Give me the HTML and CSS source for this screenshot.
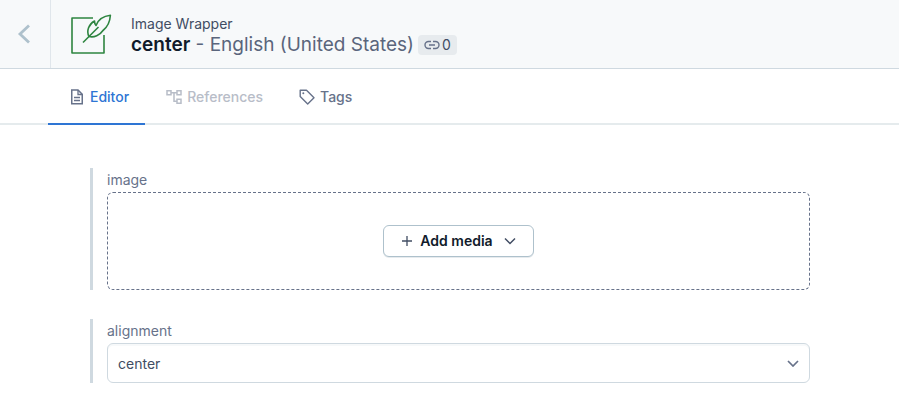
FILE: index.html
```html
<!DOCTYPE html>
<html lang="en">
<head>
<meta charset="utf-8">
<meta name="viewport" content="width=device-width, initial-scale=1">
<title>Image Wrapper</title>
<link rel="stylesheet" href="styles.css">
</head>
<body>
<header class="header">
  <button class="back" type="button" aria-label="Back">
    <svg width="14" height="22" viewBox="0 0 14 22" fill="none" stroke="currentColor" stroke-width="2.8"><path d="M12 2.500 3 11l9 8.500"/></svg>
  </button>
  <svg class="logo" width="42" height="42" viewBox="0 0 42 42" fill="none" stroke="currentColor" stroke-width="1.6" stroke-linejoin="round">
    <path d="M23 5H2v35h32V22"/>
    <path d="M13 29.500 28.500 14"/>
    <path d="M19 23.500C16 18 19 11 24.500 8C24.500 10 25 11.500 26 12.500C28.500 6 34 3 40.400 2.300C40 8 37.500 14 33 17.500C30 22 24 25 19 23.500Z"/>
  </svg>
  <div class="heading">
    <p class="kind">Image Wrapper</p>
    <div class="title-row">
      <h1 class="title"><strong>center</strong> - English (United States)</h1>
      <span class="badge">
        <svg width="16" height="10" viewBox="0 0 16 10" fill="none" stroke="currentColor" stroke-width="1.4"><path d="M7 1.500H4.500a3.500 3.500 0 0 0 0 7H7M9 1.500h2.500a3.500 3.500 0 0 1 0 7H9M5 5h6"/></svg>
        0
      </span>
    </div>
  </div>
</header>
<nav class="tabs">
  <a class="tab active" href="#editor">
    <svg width="14" height="16" viewBox="0 0 14 16" fill="none" stroke="currentColor" stroke-width="1.5"><path d="M1.750 1H8l4.250 4.250V14.750H1.750Z"/><path d="M8 1v4.500h4.250M4 8.500h6M4 11.500h6" stroke-width="1.300"/></svg>
    Editor
  </a>
  <a class="tab disabled" href="#references" aria-disabled="true">
    <svg width="16" height="16" viewBox="0 0 16 16" fill="none" stroke="currentColor" stroke-width="1.500"><path d="M1 1.750h4v4H1ZM11 1.750h4v4h-4ZM11 10.250h4v4h-4ZM5 3.750h6M8 3.750v8.500h3"/></svg>
    References
  </a>
  <a class="tab" href="#tags">
    <svg width="16" height="16" viewBox="0 0 16 16" fill="none" stroke="currentColor" stroke-width="1.400" stroke-linejoin="round"><path d="M1.200 1.200H7.500L15 8.700 8.700 15 1.200 7.500Z"/><circle cx="4.300" cy="4.300" r="1" fill="currentColor" stroke="none"/></svg>
    Tags
  </a>
</nav>
<main class="form">
  <section class="field" aria-labelledby="image-label">
    <span class="label" id="image-label">image</span>
    <div class="dropzone">
      <button class="add" type="button">
        <svg width="12" height="12" viewBox="0 0 12 12" fill="none" stroke="currentColor" stroke-width="1.300"><path d="M6 1v10M1 6h10"/></svg>
        <span>Add media</span>
        <svg class="caret" width="12" height="8" viewBox="0 0 12 8" fill="none" stroke="currentColor" stroke-width="1.500"><path d="m1 1.500 5 5 5-5"/></svg>
      </button>
    </div>
  </section>
  <section class="field">
    <label class="label" for="alignment">alignment</label>
    <div class="select-wrap">
      <select class="select" id="alignment">
        <option>center</option>
      </select>
      <svg class="select-caret" width="12" height="8" viewBox="0 0 12 8" fill="none" stroke="currentColor" stroke-width="1.700"><path d="m1 2 5 5 5-5"/></svg>
    </div>
  </section>
</main>
</body>
</html>
```
FILE: styles.css
```css
* {
  box-sizing: border-box;
}

body {
  margin: 0;
  background: #fff;
  color: #414d63;
  font: 14px/20px Inter, "Liberation Sans", sans-serif;
}

svg {
  display: block;
  flex: none;
}

.header {
  display: flex;
  align-items: center;
  min-height: 69px;
  background: #f7f9fa;
  border-bottom: 1px solid #cfd9e0;
}

.back {
  display: flex;
  align-items: center;
  justify-content: center;
  align-self: stretch;
  width: 51px;
  padding: 0 2px 0 0;
  border: 0;
  border-right: 1px solid #e0e6eb;
  background: none;
  color: #aec1cc;
}

.logo {
  margin: 0 19px;
  color: #2e8540;
}

.kind {
  margin: 0;
}

.title-row {
  display: flex;
  align-items: center;
  gap: 4px;
}

.title {
  margin: 0;
  color: #5a657c;
  font-size: 19px;
  line-height: 22px;
  font-weight: 400;
}

.title strong {
  color: #111b2b;
  font-weight: 600;
}

.heading {
  padding-top: 1px;
}

.badge {
  display: flex;
  align-items: center;
  gap: 2px;
  padding: 0 6px;
  border-radius: 4px;
  background: #e7ebee;
}

.badge svg {
  color: #67728a;
}

.tabs {
  display: flex;
  min-height: 56px;
  padding-left: 48px;
  box-shadow: inset 0 -2px #e5ebed;
}

.tab {
  display: flex;
  align-items: center;
  gap: 5px;
  padding: 3px 15px 1px 21px;
  border-bottom: 2px solid transparent;
  color: #67728a;
  font-weight: 500;
  text-decoration: none;
}

.tab.active {
  gap: 6px;
  padding: 3px 16px 1px 22px;
  border-color: #2e75d4;
  color: #2e75d4;
}

.tab.active svg {
  color: #67728a;
}

.tab.disabled {
  color: #b8bdc8;
}

.form {
  display: grid;
  gap: 29px;
  padding: 43px 89px 21px 90px;
}

.field {
  padding-left: 14px;
  border-left: 3px solid #cfd9e0;
}

.label {
  display: block;
  padding: 2px 0;
  color: #67728a;
}

.dropzone {
  display: flex;
  align-items: center;
  justify-content: center;
  min-height: 98px;
  border: 1px dashed #67728a;
  border-radius: 6px;
}

.add {
  display: flex;
  align-items: center;
  gap: 7px;
  padding: 5px 17px;
  border: 1px solid #aec1cc;
  border-radius: 6px;
  background: #fff;
  box-shadow: 0 1px 0 #e7ebee;
  color: #414d63;
  font: inherit;
  font-weight: 600;
}

.add span {
  color: #111b2b;
}

.add .caret {
  margin-left: 4px;
}

.select-wrap {
  display: grid;
  align-items: center;
}

.select,
.select-caret {
  grid-area: 1 / 1;
}

.select {
  appearance: none;
  width: 100%;
  min-height: 40px;
  padding: 2px 32px 0 10px;
  border: 1px solid #cfd9e0;
  border-radius: 6px;
  background: #fff;
  box-shadow: inset 0 2px 0 #f7f9fa;
  color: #414d63;
  font: inherit;
}

.select-caret {
  justify-self: end;
  margin-right: 11px;
  color: #67728a;
  pointer-events: none;
}
```
